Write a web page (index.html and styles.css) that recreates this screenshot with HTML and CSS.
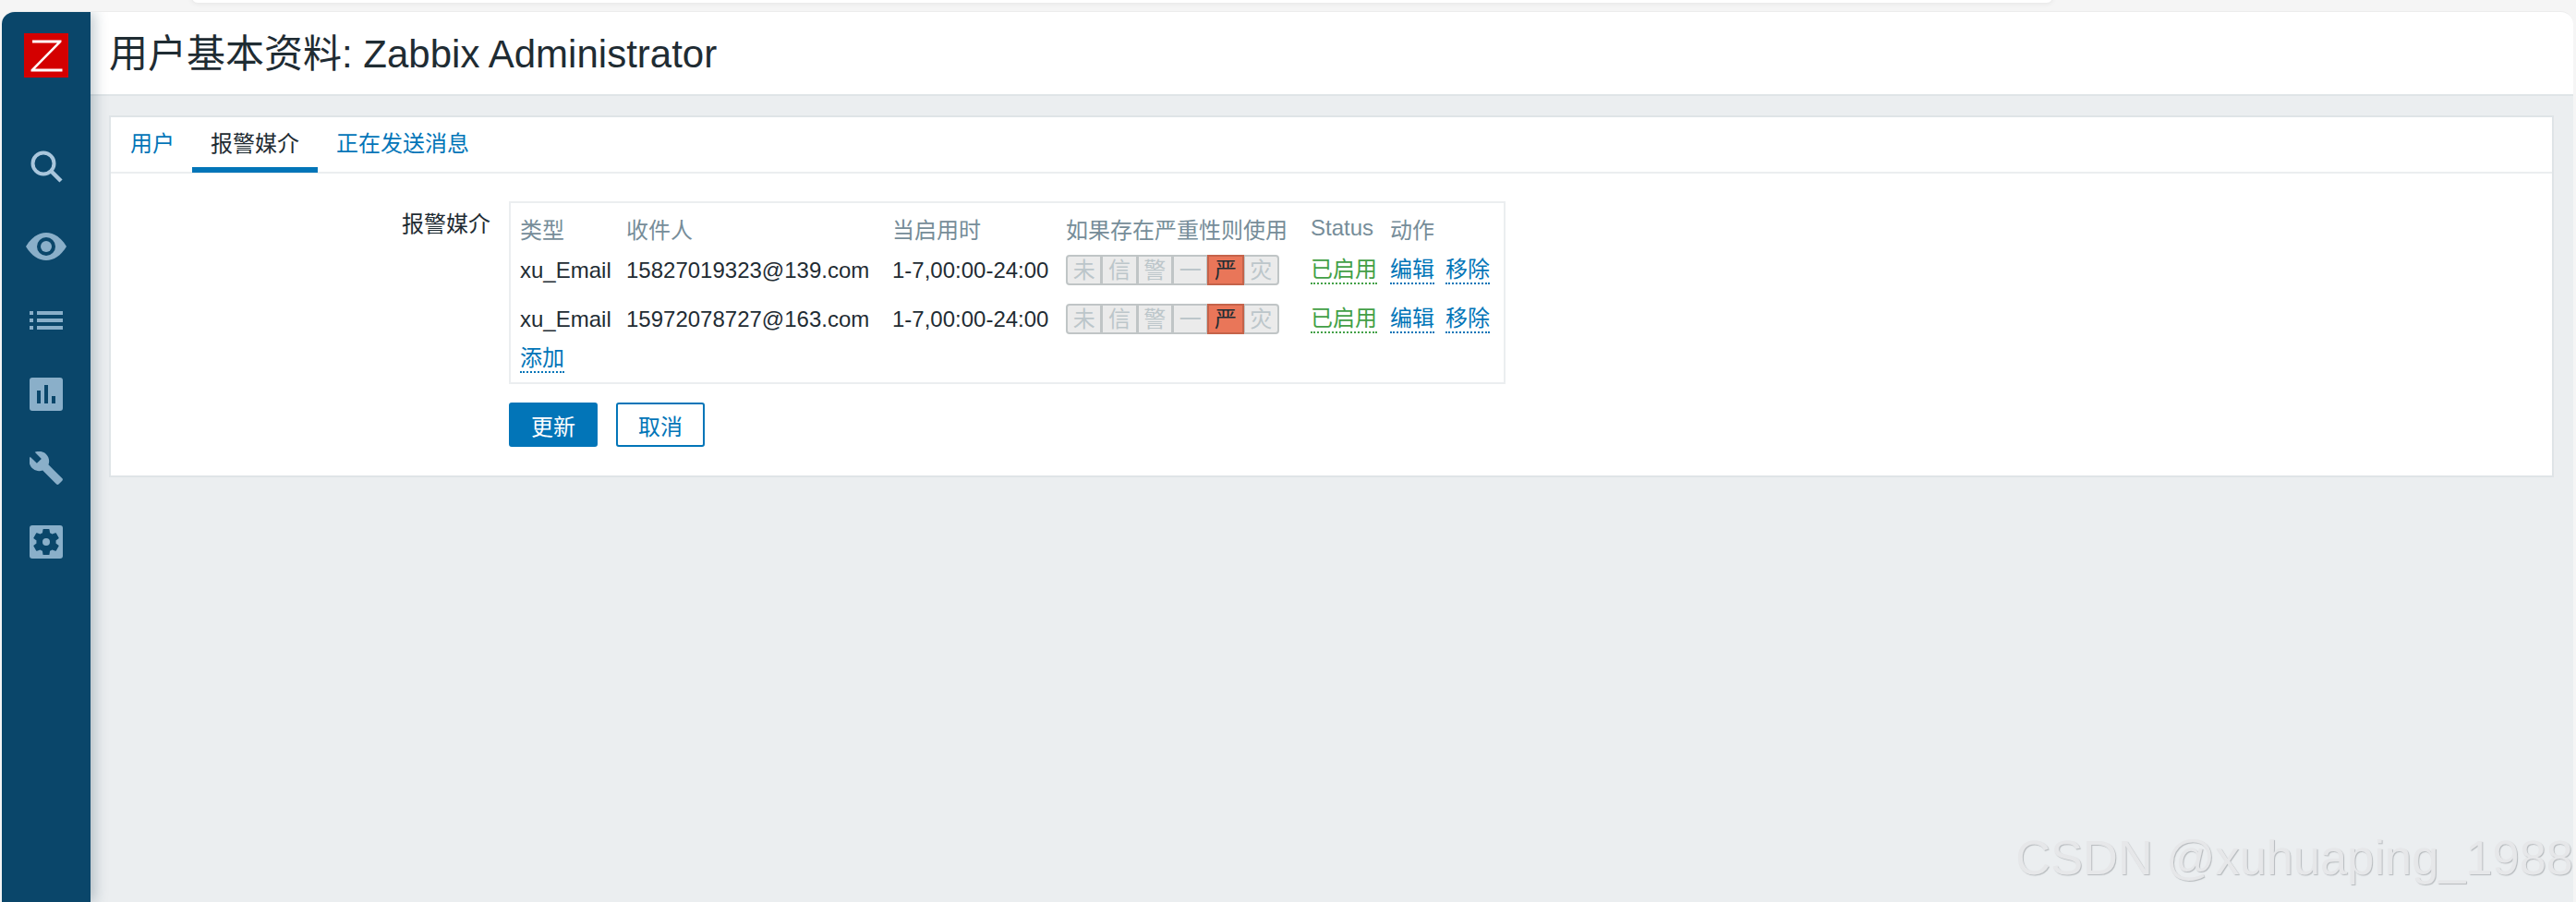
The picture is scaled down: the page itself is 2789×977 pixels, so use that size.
FILE: index.html
```html
<!DOCTYPE html>
<html lang="zh-CN">
<head>
<meta charset="utf-8">
<title>用户基本资料</title>
<link rel="stylesheet" href="styles.css">
</head>
<body>
<div class="topstrip"><div class="pill"></div></div>
<div class="window">
  <nav class="sidebar">
    <div class="logo"><svg viewBox="0 0 48 48" width="48" height="48"><rect width="48" height="48" fill="#d40000"/><path d="M9 7.500H40.500V9.500L12 38.500H41.500V41.500H7.500V39.500L36 10.500H9Z" fill="#fff"/></svg></div>
    <ul class="icons">
      <li><svg viewBox="0 0 36 36" width="36" height="36"><circle cx="15" cy="15" r="11.500" fill="none" stroke="#a9c6dc" stroke-width="4"/><path d="M23.500 23.500 34 34" stroke="#a9c6dc" stroke-width="4.500" fill="none"/></svg></li>
      <li class="eye"><svg viewBox="0 0 44 30" width="44" height="30"><path d="M0 15C6 5 14 0 22 0S38 5 44 15C38 25 30 30 22 30S6 25 0 15Z" fill="#8aafc9"/><circle cx="22" cy="15" r="10" fill="#0a466a"/><circle cx="22" cy="15" r="6" fill="#8aafc9"/></svg></li>
      <li><svg viewBox="0 0 36 20" width="36" height="20" fill="#8aafc9"><rect width="4" height="4"/><rect y="8" width="4" height="4"/><rect y="16" width="4" height="4"/><rect x="8" width="28" height="4"/><rect x="8" y="8" width="28" height="4"/><rect x="8" y="16" width="28" height="4"/></svg></li>
      <li><svg viewBox="0 0 36 36" width="36" height="36"><rect width="36" height="36" rx="3" fill="#8aafc9"/><path d="M8 14h4v14H8ZM16 8h4v20h-4ZM24 20h4v8h-4Z" fill="#0a466a"/></svg></li>
      <li><svg viewBox="0 0 36 36" width="36" height="36"><path transform="translate(-2 -2) scale(1.65)" d="M22.700 19l-9.100-9.100c.9-2.300.4-5-1.500-6.900-2-2-5-2.400-7.400-1.300L9 6 6 9 1.600 4.700C.4 7.100.9 10.100 2.900 12.100c1.900 1.900 4.600 2.400 6.900 1.500l9.100 9.100c.4.400 1 .4 1.400 0l2.300-2.300c.5-.4.5-1.100.1-1.400z" fill="#8aafc9"/></svg></li>
      <li><svg viewBox="0 0 36 36" width="36" height="36"><rect width="36" height="36" rx="3" fill="#8aafc9"/><path transform="translate(18 18) scale(1.47) translate(-12 -12)" d="M19.140 12.940c.04-.3.06-.61.06-.94 0-.32-.02-.64-.07-.94l2.030-1.580c.18-.14.23-.41.12-.61l-1.920-3.320c-.12-.22-.37-.29-.59-.22l-2.390.96c-.5-.38-1.030-.7-1.620-.94l-.36-2.540c-.04-.24-.24-.41-.48-.41h-3.840c-.24 0-.43.17-.47.41l-.36 2.540c-.59.24-1.130.57-1.620.94l-2.390-.96c-.22-.08-.47 0-.59.22L2.740 8.870c-.12.21-.08.47.12.61l2.030 1.580c-.05.3-.09.63-.09.94s.02.64.07.94l-2.030 1.580c-.18.14-.23.41-.12.61l1.920 3.320c.12.22.37.29.59.22l2.390-.96c.5.38 1.030.7 1.620.94l.36 2.540c.05.24.24.41.48.41h3.840c.24 0 .44-.17.47-.41l.36-2.540c.59-.24 1.130-.56 1.620-.94l2.390.96c.22.08.47 0 .59-.22l1.920-3.320c.12-.22.07-.47-.12-.61l-2.010-1.580z" fill="#0a466a"/><circle cx="18" cy="18" r="4" fill="#8aafc9"/></svg></li>
    </ul>
  </nav>
  <div class="main">
    <header class="header"><h1>用户基本资料: Zabbix Administrator</h1></header>
    <div class="content">
      <section class="card">
        <div class="tabs">
          <a class="tab">用户</a>
          <a class="tab active">报警媒介</a>
          <a class="tab">正在发送消息</a>
        </div>
        <div class="form">
          <div class="form-row">
            <label class="form-label">报警媒介</label>
            <div class="media">
              <table class="media-table">
                <colgroup>
                  <col class="c-type"><col class="c-to"><col class="c-when"><col class="c-sev"><col class="c-status"><col class="c-act">
                </colgroup>
                <thead>
                  <tr><th>类型</th><th>收件人</th><th>当启用时</th><th>如果存在严重性则使用</th><th>Status</th><th>动作</th></tr>
                </thead>
                <tbody>
                  <tr>
                    <td>xu_Email</td><td>15827019323@139.com</td><td>1-7,00:00-24:00</td>
                    <td><div class="sev"><span>未</span><span>信</span><span>警</span><span>一</span><span class="on">严</span><span>灾</span></div></td>
                    <td><a class="dot green">已启用</a></td>
                    <td><div class="actions"><a class="dot">编辑</a><a class="dot">移除</a></div></td>
                  </tr>
                  <tr>
                    <td>xu_Email</td><td>15972078727@163.com</td><td>1-7,00:00-24:00</td>
                    <td><div class="sev"><span>未</span><span>信</span><span>警</span><span>一</span><span class="on">严</span><span>灾</span></div></td>
                    <td><a class="dot green">已启用</a></td>
                    <td><div class="actions"><a class="dot">编辑</a><a class="dot">移除</a></div></td>
                  </tr>
                  <tr class="add-row"><td colspan="6"><a class="dot">添加</a></td></tr>
                </tbody>
              </table>
            </div>
          </div>
          <div class="buttons">
            <button class="btn primary">更新</button>
            <button class="btn">取消</button>
          </div>
        </div>
      </section>
      <div class="watermark">CSDN @xuhuaping_1988</div>
    </div>
  </div>
</div>
</body>
</html>
```

FILE: styles.css
```css
* { box-sizing: border-box; }
html, body { margin: 0; height: 100%; }
body {
  height: 977px;
  overflow: hidden;
  background: #f5f5f5;
  font-family: "Liberation Sans", "Noto Sans CJK SC", sans-serif;
  font-size: 24px;
  color: #1f2c33;
  display: flex;
  flex-direction: column;
  padding: 0 3px 0 2px;
}
.topstrip { height: 12px; flex: none; position: relative; }
.pill {
  position: absolute;
  left: 205px;
  width: 2016px;
  top: -10px;
  height: 14px;
  background: #fff;
  border: 1px solid #ececec;
  border-radius: 12px;
  box-shadow: 0 1px 5px rgba(0, 0, 0, .05);
}
.window {
  flex: 1;
  display: flex;
  min-height: 0;
  border-radius: 14px 14px 0 0;
  overflow: hidden;
  border-top: 1px solid #ececec;
}
.sidebar {
  width: 96px;
  flex: none;
  background: #0a466a;
  display: flex;
  flex-direction: column;
  align-items: center;
  position: relative;
  z-index: 2;
  box-shadow: 4px 0 14px rgba(30, 60, 80, .28);
}
.logo { margin-top: 23px; height: 48px; line-height: 0; }
.icons {
  list-style: none;
  margin: 56px 0 0;
  padding: 0;
  display: flex;
  flex-direction: column;
  width: 100%;
}
.icons li {
  height: 80px;
  display: flex;
  align-items: center;
  justify-content: center;
}
.icons .eye { margin-top: 7px; }
.main { flex: 1; min-width: 0; display: flex; flex-direction: column; background: #ebeef0; }
.header {
  height: 91px;
  flex: none;
  background: #fff;
  border-bottom: 2px solid #dfe4e7;
  display: flex;
  align-items: center;
  padding: 0 0 0 20px;
}
.header h1 { margin: 0; font-size: 42px; font-weight: 400; color: #1f2c33; line-height: 1; position: relative; top: 1px; }
.content { flex: 1; padding: 21px 21px 0 20px; position: relative; }
.card { background: #fff; border: 2px solid #dfe4e7; height: 392px; }
.tabs { display: flex; height: 61px; border-bottom: 2px solid #ebeef0; padding-left: 21px; }
.tab {
  color: #0275b8;
  padding: 0 21px;
  line-height: 58px;
  height: 60px;
  border-bottom: 6px solid transparent;
}
.tab:first-child { padding-left: 0; padding-right: 19px; }
.tab.active { color: #1f2c33; border-bottom-color: #0275b8; padding: 0 20px; }
.tab.active + .tab { padding-left: 20px; }
.form { padding: 30px 0 0; }
.form-row { display: flex; align-items: flex-start; }
.form-label { width: 411px; text-align: right; padding-top: 7px; line-height: 36px; flex: none; }
.media {
  margin-left: 20px;
  width: 1079px;
  height: 198px;
  border: 2px solid #ebeef0;
  padding: 6px 10px;
}
.media-table { border-collapse: collapse; white-space: nowrap; table-layout: fixed; width: 1055px; }
.c-type { width: 115px; }
.c-to { width: 288px; }
.c-when { width: 188px; }
.c-sev { width: 265px; }
.c-status { width: 86px; }
.media-table th { font-weight: 400; color: #768d99; text-align: left; padding: 2px 0 0; height: 40px; }
.media-table td { padding: 0; height: 53px; vertical-align: middle; }
.media-table .add-row td { height: 36px; padding-bottom: 2px; }
.sev { display: flex; width: 231px; height: 33px; line-height: 29px; }
.sev span {
  flex: 1 1 0;
  margin-left: -1px;
  background: #ebebeb;
  border: 2px solid #c0c5c6;
  color: #bcc6ca;
  text-align: center;
}
.sev span:first-child { margin-left: 0; border-radius: 4px 0 0 4px; }
.sev span:last-child { border-radius: 0 4px 4px 0; }
.sev .on { background: #e97659; border-color: #c4634a; color: #1f2c33; position: relative; }
.dot { color: #0275b8; border-bottom: 2px dotted #0275b8; line-height: 28px; display: inline-block; }
.dot.green { color: #43a047; border-bottom-color: #43a047; }
.actions { display: flex; gap: 12px; }
.buttons { display: flex; gap: 20px; margin: 20px 0 0 431px; }
.btn {
  width: 96px;
  height: 48px;
  border: 2px solid #0275b8;
  border-radius: 3px;
  background: #fff;
  color: #0275b8;
  font: inherit;
  padding: 0;
}
.btn.primary { background: #0275b8; color: #fff; }
.watermark {
  position: absolute;
  right: 0;
  bottom: 16px;
  font-family: "Liberation Sans Narrow", "Liberation Sans", sans-serif;
  font-size: 52.400px;
  line-height: 1.2;
  color: #e6e7e9;
  text-shadow: 1px 1px 1px #b6babd;
  white-space: nowrap;
}
```
